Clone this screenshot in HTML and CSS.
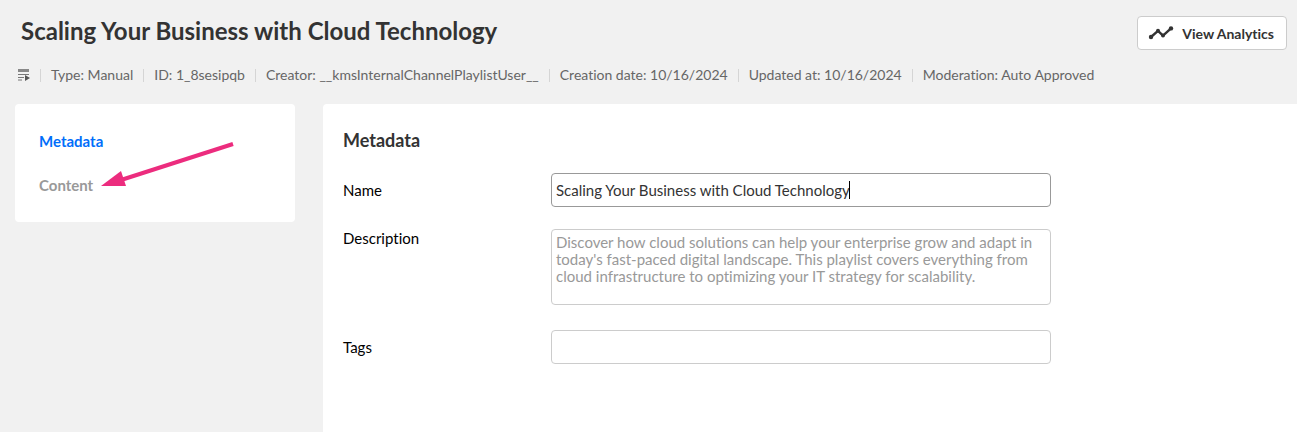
FILE: index.html
```html
<!DOCTYPE html>
<html lang="en">
<head>
    <meta charset="UTF-8">
    <meta name="viewport" content="width=device-width, initial-scale=1.0">
    <title>Scaling Your Business with Cloud Technology</title>
    <link rel="stylesheet" href="styles.css">
</head>
<body>
    <header class="header">
        <div class="title-row">
            <h1>Scaling Your Business with Cloud Technology</h1>
            <button type="button" class="analytics-btn">
                <svg width="26" height="14" viewBox="0 0 26 14" aria-hidden="true">
                    <path d="M3 11L10 4.8L15 9.6L23 2.4" fill="none" stroke="#333" stroke-width="2.4"/>
                    <circle cx="3" cy="11" r="2.2" fill="#333"/>
                    <circle cx="10" cy="4.8" r="2" fill="#333"/>
                    <circle cx="15" cy="9.6" r="2" fill="#333"/>
                    <circle cx="23" cy="2.4" r="2.2" fill="#333"/>
                </svg>
                View Analytics
            </button>
        </div>
        <ul class="info">
            <li>
                <svg width="12" height="12" viewBox="0 0 12 12" aria-label="Playlist">
                    <path d="M0 1.5h11" stroke="#888" stroke-width="3"/>
                    <path d="M0 5.5h11M0 8.5h6M0 11h4" stroke="#777" stroke-width="1"/>
                    <path d="M7 6l5 3l-5 3z" fill="#555"/>
                </svg>
            </li>
            <li>Type: Manual</li>
            <li>ID: 1_8sesipqb</li>
            <li>Creator: __kmsInternalChannelPlaylistUser__</li>
            <li>Creation date: 10/16/2024</li>
            <li>Updated at: 10/16/2024</li>
            <li>Moderation: Auto Approved</li>
        </ul>
    </header>

    <div class="layout">
        <nav class="sidebar">
            <a href="#metadata" class="active">Metadata</a>
            <a href="#content">Content</a>
            <svg class="arrow" width="134" height="48" viewBox="0 0 134 48" aria-hidden="true">
                <path d="M20 41L132 5" stroke="#ec2c7e" stroke-width="4"/>
                <path d="M0 47L20 32L25 47z" fill="#ec2c7e"/>
            </svg>
        </nav>

        <main class="content" id="metadata">
            <h2>Metadata</h2>
            <form>
                <div class="field">
                    <label for="name">Name</label>
                    <div class="control">
                        <input type="text" id="name" value="Scaling Your Business with Cloud Technology" autofocus>
                        <span class="caret"></span>
                    </div>
                </div>
                <div class="field field-top">
                    <label for="description">Description</label>
                    <div class="control">
                        <textarea id="description">Discover how cloud solutions can help your enterprise grow and adapt in today's fast-paced digital landscape. This playlist covers everything from cloud infrastructure to optimizing your IT strategy for scalability.</textarea>
                    </div>
                </div>
                <div class="field">
                    <label for="tags">Tags</label>
                    <div class="control">
                        <input type="text" id="tags">
                    </div>
                </div>
            </form>
        </main>
    </div>
</body>
</html>
```
FILE: styles.css
```css
* {
    margin: 0;
    padding: 0;
    box-sizing: border-box;
}
body {
    display: flex;
    flex-direction: column;
    min-height: 100vh;
    background-color: #f1f1f1;
    font-family: Lato, sans-serif;
    font-size: 15px;
    font-variant-ligatures: none;
    color: #333;
}
.header {
    padding: 16px 10px 20px 18px;
}
.title-row {
    display: flex;
    justify-content: space-between;
    align-items: center;
    padding-left: 3px;
}
h1 {
    padding-bottom: 4px;
    font-size: 24px;
    line-height: 30px;
    font-weight: 700;
}
.analytics-btn {
    display: flex;
    align-items: center;
    gap: 8px;
    height: 34px;
    padding: 0 12px 0 10px;
    border: 1px solid #ccc;
    border-radius: 4px;
    background-color: white;
    color: #333;
    font-family: Lato, sans-serif;
    font-size: 14px;
    font-weight: 700;
    font-variant-ligatures: none;
    cursor: pointer;
}
.info {
    display: flex;
    align-items: center;
    margin-top: 16px;
    list-style: none;
    font-size: 14px;
    line-height: 18px;
    color: #666;
}
.info li {
    display: flex;
    align-items: center;
}
.info li + li::before {
    content: "";
    width: 1px;
    height: 13px;
    margin: 0 10px;
    background-color: #d5d5d5;
}
.layout {
    flex: 1;
    display: flex;
    align-items: flex-start;
    gap: 28px;
    padding-left: 15px;
}
.sidebar {
    position: relative;
    flex: 0 0 280px;
    display: flex;
    flex-direction: column;
    gap: 24px;
    padding: 27px 24px;
    border-radius: 4px;
    background-color: white;
}
.sidebar a {
    color: #999;
    font-weight: 700;
    line-height: 20px;
    text-decoration: none;
}
.sidebar .active {
    color: #006efa;
}
.arrow {
    position: absolute;
    top: 35px;
    left: 86px;
}
.content {
    flex: 1;
    align-self: stretch;
    padding: 24px 20px;
    border-radius: 4px 0 0 0;
    background-color: white;
}
h2 {
    margin-bottom: 20px;
    font-size: 18px;
    line-height: 25px;
}
.field {
    display: flex;
    align-items: center;
    margin-bottom: 22px;
    color: #000;
}
.field-top {
    align-items: flex-start;
    margin-bottom: 25px;
}
.field label {
    flex: 0 0 208px;
    line-height: 18px;
}
.control {
    position: relative;
    flex: 0 1 500px;
    min-width: 0;
}
.field input,
.field textarea {
    display: block;
    width: 100%;
    height: 34px;
    padding: 0 4px;
    border: 1px solid #ccc;
    border-radius: 4px;
    outline: none;
    color: #333;
    font-family: Lato, sans-serif;
    font-size: 15px;
    font-variant-ligatures: none;
    caret-color: transparent;
}
.field input:focus {
    border-color: #999;
}
.caret {
    position: absolute;
    top: 8px;
    left: 298px;
    width: 1px;
    height: 18px;
    background-color: #000;
}
.field textarea {
    height: 76px;
    padding-top: 4px;
    line-height: 17px;
    color: #999;
    resize: none;
}
```
